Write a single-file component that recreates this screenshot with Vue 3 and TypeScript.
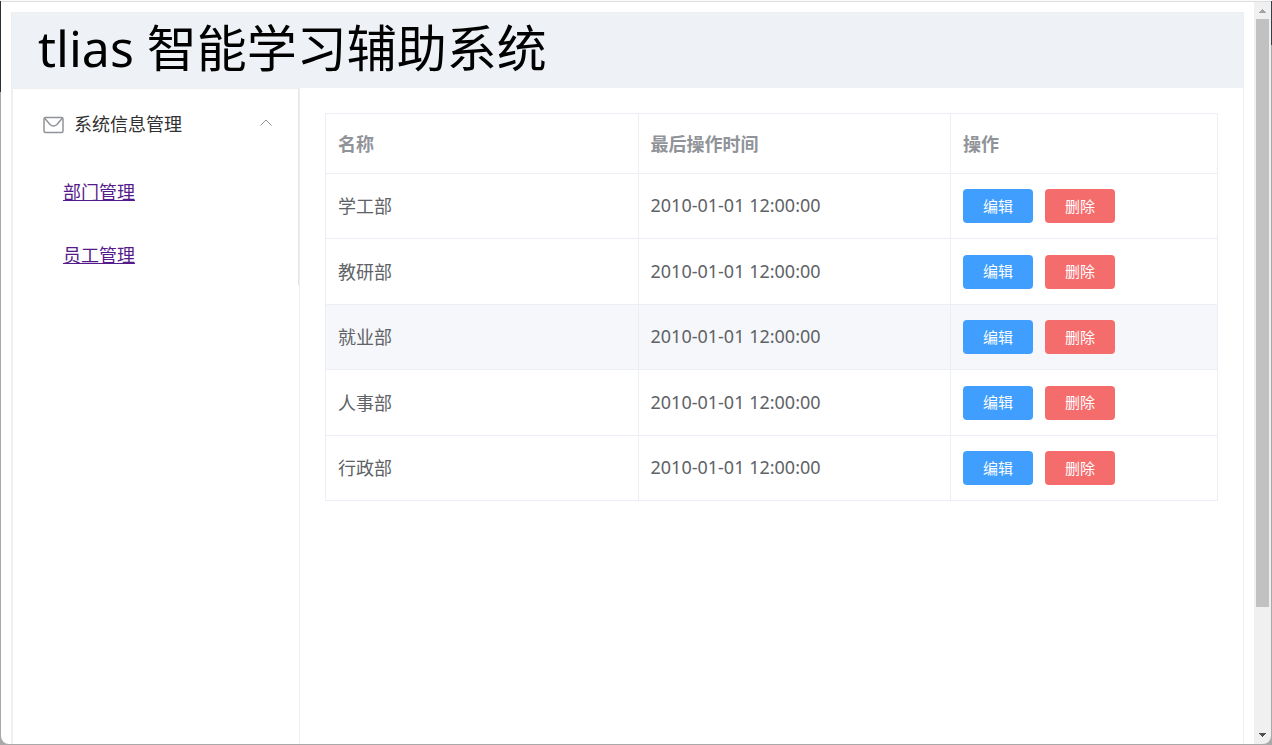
<script setup lang="ts">
import { ref } from 'vue'

interface Department {
  id: number
  name: string
  updatedAt: string
}

const menuOpen = ref(true)
const activeId = ref(3)

const menuItems: string[] = ['部门管理', '员工管理']

const departments: Department[] = [
  { id: 1, name: '学工部', updatedAt: '2010-01-01 12:00:00' },
  { id: 2, name: '教研部', updatedAt: '2010-01-01 12:00:00' },
  { id: 3, name: '就业部', updatedAt: '2010-01-01 12:00:00' },
  { id: 4, name: '人事部', updatedAt: '2010-01-01 12:00:00' },
  { id: 5, name: '行政部', updatedAt: '2010-01-01 12:00:00' },
]
</script>

<template>
  <div class="window">
    <div class="viewport">
      <div class="layout">
        <header class="header">tlias 智能学习辅助系统</header>
        <div class="body">
          <aside class="aside">
            <nav class="menu">
              <button class="menu-title" type="button" :aria-expanded="menuOpen" @click="menuOpen = !menuOpen">
                <svg class="mail" viewBox="0 0 22 18" aria-hidden="true">
                  <rect x="1" y="1.5" width="19" height="15" rx="1.5" />
                  <path d="M1.5 2 L7 8.5 Q10.5 11.5 14 8.5 L19.5 2" />
                </svg>
                <span class="menu-text">系统信息管理</span>
                <svg class="arrow" viewBox="0 0 12 8" aria-hidden="true">
                  <path d="M0.5 6.5 L6 1 L11.5 6.5" />
                </svg>
              </button>
              <ul v-if="menuOpen" class="submenu">
                <li v-for="item in menuItems" :key="item"><a href="#">{{ item }}</a></li>
              </ul>
            </nav>
          </aside>
          <main class="main">
            <table class="table">
              <colgroup>
                <col />
                <col />
                <col class="col-actions" />
              </colgroup>
              <thead>
                <tr>
                  <th scope="col">名称</th>
                  <th scope="col">最后操作时间</th>
                  <th scope="col">操作</th>
                </tr>
              </thead>
              <tbody>
                <tr
                  v-for="row in departments"
                  :key="row.id"
                  :class="{ active: row.id === activeId }"
                  @mouseenter="activeId = row.id"
                >
                  <td>{{ row.name }}</td>
                  <td>{{ row.updatedAt }}</td>
                  <td class="cell-actions">
                    <div class="actions">
                      <button class="btn primary" type="button">编辑</button>
                      <button class="btn danger" type="button">删除</button>
                    </div>
                  </td>
                </tr>
              </tbody>
            </table>
          </main>
        </div>
      </div>
    </div>
    <div class="scrollbar" aria-hidden="true">
      <svg class="scroll-arrow" viewBox="0 0 17 17"><path class="up" d="M5 11h7v-1h-1v-1h-1v-1h-1v-1h-1v1h-1v1h-1v1h-1z" /></svg>
      <div class="track"><div class="thumb"></div></div>
      <svg class="scroll-arrow" viewBox="0 0 17 17"><path class="down" d="M5 6h7v1h-1v1h-1v1h-1v1h-1v-1h-1v-1h-1v-1h-1z" /></svg>
    </div>
  </div>
</template>

<style>
body {
  background: linear-gradient(#2f3036 0 92px, transparent 92px) left / 50% 100% no-repeat,
    linear-gradient(#3b3e48 0 45px, transparent 45px) right / 50% 100% no-repeat,
    #a9a9a9;
}
</style>

<style scoped>
.window {
  box-sizing: border-box;
  display: flex;
  height: 100vh;
  padding: 0 1px 1px;
  border-top: 1px solid #fafafa;
  font-family: "Noto Sans", "Noto Sans CJK SC", sans-serif;
  font-size: 18px;
}

.viewport {
  box-sizing: border-box;
  flex: 1;
  min-width: 0;
  overflow: hidden;
  padding: 10px 10px 0;
  border-top: 1px solid #dedede;
  border-bottom-left-radius: 8px;
  background: #fff;
}

.layout {
  box-sizing: border-box;
  display: flex;
  flex-direction: column;
  min-height: 100%;
  border: 1px solid #eee;
  border-bottom: 0;
}

.header {
  box-sizing: border-box;
  height: 75px;
  padding: 0 26px;
  overflow: hidden;
  background: #eef1f6;
  color: #000;
  font-size: 50px;
  line-height: 70px;
  white-space: nowrap;
}

.body {
  display: flex;
  flex: 1;
}

.aside {
  box-sizing: border-box;
  flex: none;
  width: 288px;
  border: 1px solid #eee;
  border-bottom: 0;
}

.menu {
  border-right: 1px solid #e6e6e6;
}

.menu-title {
  box-sizing: border-box;
  display: flex;
  align-items: center;
  width: 100%;
  height: 70px;
  padding: 0 26px 0 30px;
  border: 0;
  background: none;
  color: #303133;
  font: inherit;
  text-align: left;
  cursor: pointer;
}

.mail {
  width: 22px;
  height: 18px;
  margin-top: 2px;
  margin-right: 9px;
  fill: none;
  stroke: #909399;
  stroke-width: 1.5;
}

.menu-text {
  flex: 1;
  padding-bottom: 2px;
}

.arrow {
  width: 12px;
  height: 8px;
  margin-bottom: 2px;
  fill: none;
  stroke: #909399;
  stroke-width: 1;
}

.submenu {
  margin: 0;
  padding: 0;
  list-style: none;
}

.submenu li {
  height: 63px;
  padding-left: 50px;
  line-height: 66px;
}

.submenu a {
  color: #551a8b;
}

.main {
  flex: 1;
  min-width: 0;
  padding: 25px;
}

.table {
  width: 100%;
  border: 1px solid #ebeef5;
  border-width: 1px 0 0 1px;
  border-spacing: 0;
  table-layout: fixed;
  color: #606266;
}

.col-actions {
  width: 267px;
}

.table th,
.table td {
  box-sizing: border-box;
  height: 65px;
  padding: 0 12px 2px;
  border: 1px solid #ebeef5;
  border-width: 0 1px 1px 0;
  text-align: left;
}

.table th {
  height: 60px;
  color: #909399;
  font-weight: 700;
}

.table .cell-actions {
  padding-bottom: 0;
}

.table tbody tr:nth-child(even) td {
  height: 66px;
}

.active td {
  background: #f5f7fa;
}

.actions {
  display: flex;
  gap: 12px;
}

.btn {
  width: 70px;
  height: 34px;
  padding: 0 0 2px;
  border: 0;
  border-radius: 4px;
  color: #fff;
  font-family: inherit;
  font-size: 15px;
  cursor: pointer;
}

.primary {
  background: #409eff;
}

.danger {
  background: #f56c6c;
}

.scrollbar {
  box-sizing: border-box;
  display: flex;
  flex: none;
  flex-direction: column;
  width: 17px;
  border-top: 1px solid #dedede;
  border-bottom-right-radius: 8px;
  background: #f0f0f0;
}

.scroll-arrow {
  flex: none;
  width: 17px;
  height: 17px;
}

.up {
  fill: #a3a3a3;
}

.down {
  fill: #505050;
}

.track {
  flex: 1;
  padding: 0 2px;
}

.thumb {
  height: 83%;
  background: #c1c1c1;
}
</style>
